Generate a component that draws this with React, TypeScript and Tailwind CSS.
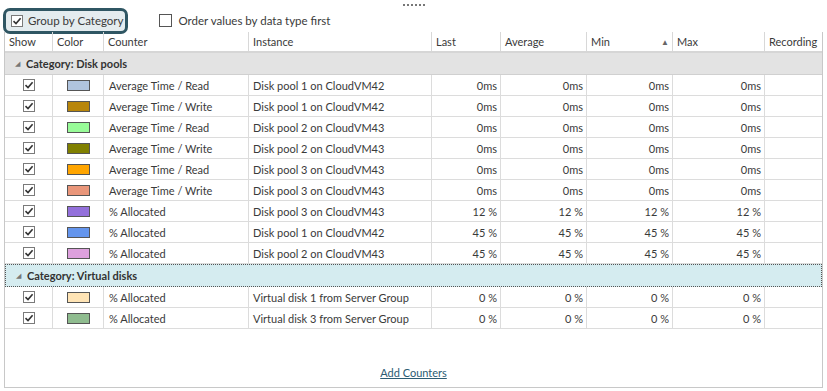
import React from "react";

type Row = { show: boolean; color: string; counter: string; instance: string; last: string; avg: string; min: string; max: string };

const diskPools: Row[] = [
  { show: true, color: "#b0c4de", counter: "Average Time / Read", instance: "Disk pool 1 on CloudVM42", last: "0ms", avg: "0ms", min: "0ms", max: "0ms" },
  { show: true, color: "#b8860b", counter: "Average Time / Write", instance: "Disk pool 1 on CloudVM42", last: "0ms", avg: "0ms", min: "0ms", max: "0ms" },
  { show: true, color: "#98fb98", counter: "Average Time / Read", instance: "Disk pool 2 on CloudVM43", last: "0ms", avg: "0ms", min: "0ms", max: "0ms" },
  { show: true, color: "#808000", counter: "Average Time / Write", instance: "Disk pool 2 on CloudVM43", last: "0ms", avg: "0ms", min: "0ms", max: "0ms" },
  { show: true, color: "#ffa500", counter: "Average Time / Read", instance: "Disk pool 3 on CloudVM43", last: "0ms", avg: "0ms", min: "0ms", max: "0ms" },
  { show: true, color: "#e9967a", counter: "Average Time / Write", instance: "Disk pool 3 on CloudVM43", last: "0ms", avg: "0ms", min: "0ms", max: "0ms" },
  { show: true, color: "#9370db", counter: "% Allocated", instance: "Disk pool 3 on CloudVM43", last: "12 %", avg: "12 %", min: "12 %", max: "12 %" },
  { show: true, color: "#6495ed", counter: "% Allocated", instance: "Disk pool 1 on CloudVM42", last: "45 %", avg: "45 %", min: "45 %", max: "45 %" },
  { show: true, color: "#dda0dd", counter: "% Allocated", instance: "Disk pool 2 on CloudVM43", last: "45 %", avg: "45 %", min: "45 %", max: "45 %" },
];

const virtualDisks: Row[] = [
  { show: true, color: "#ffe4b5", counter: "% Allocated", instance: "Virtual disk 1 from Server Group", last: "0 %", avg: "0 %", min: "0 %", max: "0 %" },
  { show: true, color: "#8fbc8f", counter: "% Allocated", instance: "Virtual disk 3 from Server Group", last: "0 %", avg: "0 %", min: "0 %", max: "0 %" },
];

const cols = "grid grid-cols-[48px_51px_145px_183px_69px_86px_86px_92px_1fr]";

function Check({ checked }: { checked: boolean }) {
  return (
    <span className="inline-flex h-[12px] w-[12px] items-center justify-center border border-[#7a7a7a] bg-white">
      {checked && (
        <svg width="10" height="10" viewBox="0 0 10 10">
          <path d="M1.5 5.2 L4 7.6 L8.6 2.2" fill="none" stroke="#333" strokeWidth="1.6" />
        </svg>
      )}
    </span>
  );
}

function DataRow({ row }: { row: Row }) {
  const cell = "border-r border-[#dcdcdc] h-[20px] flex items-center whitespace-nowrap overflow-hidden";
  return (
    <div className={`${cols} border-b border-[#dcdcdc]`}>
      <div className={`${cell} justify-center`}>
        <Check checked={row.show} />
      </div>
      <div className={`${cell} justify-center`}>
        <span className="h-[11px] w-[23px] border border-[#555]" style={{ backgroundColor: row.color }} />
      </div>
      <div className={`${cell} pl-[5px]`}>{row.counter}</div>
      <div className={`${cell} pl-[4px]`}>{row.instance}</div>
      <div className={`${cell} justify-end pr-[3px]`}>{row.last}</div>
      <div className={`${cell} justify-end pr-[3px]`}>{row.avg}</div>
      <div className={`${cell} justify-end pr-[3px]`}>{row.min}</div>
      <div className={`${cell} justify-end pr-[3px]`}>{row.max}</div>
      <div className="h-[20px]" />
    </div>
  );
}

function CategoryRow({ label, selected }: { label: string; selected?: boolean }) {
  return (
    <div
      className={
        selected
          ? "flex h-[23px] items-center border border-dotted border-[#555] bg-[#d5ecf0]"
          : "flex h-[22px] items-center border-b border-[#d0d0d0] bg-[#e3e3e3]"
      }
    >
      <span className="ml-[10px] mr-[6px] text-[7px] text-[#777]">◢</span>
      <span className="font-bold text-[#333]">{label}</span>
    </div>
  );
}

export default function App() {
  const headers = ["Show", "Color", "Counter", "Instance", "Last", "Average", "Min", "Max", "Recording"];
  return (
    <div className="h-[391px] w-[827px] bg-white text-[11px] text-[#3a3a3a] font-['Lato',sans-serif] leading-none">
      <div className="flex h-[8px] items-center justify-center gap-[2px] pt-[2px]">
        {[0, 1, 2, 3, 4, 5].map((i) => (
          <span key={i} className="h-[2px] w-[2px] bg-[#777]" />
        ))}
      </div>
      <div className="flex h-[24px] items-center pt-[1px]">
        <div className="ml-[3px] flex h-[26px] items-center gap-[5px] rounded-[7px] border-[3px] border-[#2f5663] bg-[#e4ecef] pl-[5px] pr-[2px]">
          <Check checked />
          <span className="text-[11.5px]">Group by Category</span>
        </div>
        <div className="ml-[31px] flex items-center gap-[6px]">
          <span className="h-[13px] w-[13px] border border-[#555] bg-white" />
          <span className="text-[11.5px]">Order values by data type first</span>
        </div>
      </div>
      <div className="mx-[4px] flex h-[356px] flex-col border-x border-b border-[#c8c8c8]">
        <div className={`${cols} h-[21px] border-b-2 border-[#d6d6d6]`}>
          {headers.map((h, i) => (
            <div key={h} className={`flex items-center pl-[4px] ${i < headers.length - 1 ? "border-r border-[#d8d8d8]" : ""}`}>
              <span className="flex-1">{h}</span>
              {h === "Min" && <span className="mr-[3px] text-[8px] text-[#666]">▲</span>}
            </div>
          ))}
        </div>
        <CategoryRow label="Category: Disk pools" />
        {diskPools.map((r, i) => (
          <DataRow key={i} row={r} />
        ))}
        <CategoryRow label="Category: Virtual disks" selected />
        {virtualDisks.map((r, i) => (
          <DataRow key={i} row={r} />
        ))}
        <div className="flex flex-1 items-end justify-center pb-[9px]">
          <a className="cursor-pointer text-[#2b5c73] underline">Add Counters</a>
        </div>
      </div>
    </div>
  );
}
